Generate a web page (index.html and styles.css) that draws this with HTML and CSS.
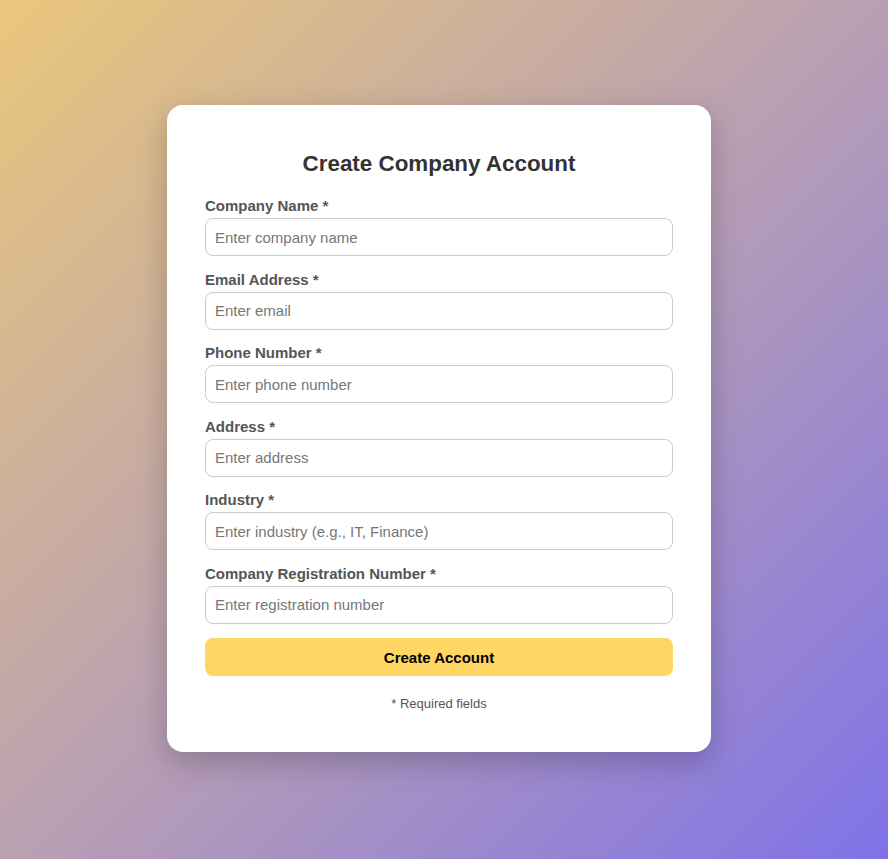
FILE: index.html
```html
<!DOCTYPE html>
<html lang="en">
<head>
<meta charset="utf-8">
<title>Create Company Account</title>
<link rel="stylesheet" href="styles.css">
</head>
<body>
<main class="page">
  <form class="card">
    <h2 class="title">Create Company Account</h2>
    <div class="field">
      <label class="label">Company Name *</label>
      <input class="input" type="text" placeholder="Enter company name">
    </div>
    <div class="field">
      <label class="label">Email Address *</label>
      <input class="input" type="text" placeholder="Enter email">
    </div>
    <div class="field">
      <label class="label">Phone Number *</label>
      <input class="input" type="text" placeholder="Enter phone number">
    </div>
    <div class="field">
      <label class="label">Address *</label>
      <input class="input" type="text" placeholder="Enter address">
    </div>
    <div class="field">
      <label class="label">Industry *</label>
      <input class="input" type="text" placeholder="Enter industry (e.g., IT, Finance)">
    </div>
    <div class="field">
      <label class="label">Company Registration Number *</label>
      <input class="input" type="text" placeholder="Enter registration number">
    </div>
    <button class="btn" type="button">Create Account</button>
    <p class="note">* Required fields</p>
  </form>
</main>
</body>
</html>
```
FILE: styles.css
```css
* { box-sizing: border-box; }
html, body { margin: 0; height: 100%; }
body {
  font-family: "Liberation Sans", Arial, sans-serif;
  background: linear-gradient(135deg, #eac77b 0%, #b9a0b2 50%, #7f72e8 100%);
  min-height: 859px;
}
.page {
  display: flex;
  justify-content: center;
  padding-top: 105px;
  padding-right: 10px;
}
.card {
  width: 544px;
  background: #fff;
  border-radius: 16px;
  padding: 45px 38px 40px;
  box-shadow: 0 10px 30px rgba(0, 0, 0, 0.22);
  display: flex;
  flex-direction: column;
}
.title {
  margin: 0 0 19px;
  text-align: center;
  font-size: 22.4px;
  font-weight: bold;
  color: #333;
  line-height: 28px;
}
.field {
  display: flex;
  flex-direction: column;
  margin-bottom: 14.5px;
}
.label {
  font-size: 15px;
  font-weight: bold;
  color: #555;
  line-height: 17px;
  margin-bottom: 4px;
}
.input {
  height: 38px;
  border: 1px solid #ccc;
  border-radius: 8px;
  padding: 0 9px;
  font-family: "Liberation Sans", Arial, sans-serif;
  font-size: 15px;
  color: #333;
}
.input::placeholder { color: #777; }
.btn {
  height: 38px;
  border: none;
  border-radius: 8px;
  background: #ffd563;
  font-family: "Liberation Sans", Arial, sans-serif;
  font-size: 15px;
  font-weight: bold;
  color: #000;
}
.note {
  margin: 20px 0 0;
  text-align: center;
  font-size: 13px;
  color: #555;
  line-height: 16px;
}
```
